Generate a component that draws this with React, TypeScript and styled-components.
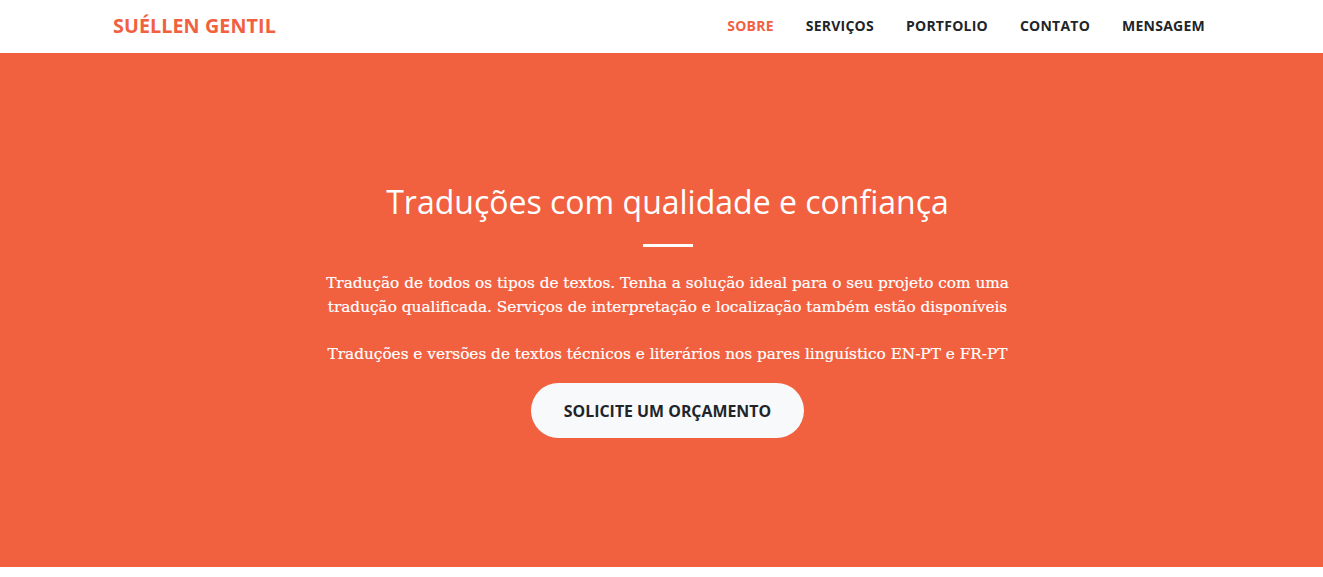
import React from "react";
import styled, { createGlobalStyle } from "styled-components";

const Global = createGlobalStyle`
  html, body { margin: 0; padding: 0; background: #ffffff; }
  body { font-family: "Open Sans", "Liberation Sans", sans-serif; }
  * { box-sizing: border-box; }
`;

const primary = "#f1603f";

const Page = styled.div`
  width: 100%;
  min-height: 577px;
  background: #ffffff;
`;

const NavBar = styled.nav`
  height: 53px;
  background: #ffffff;
  display: flex;
  align-items: center;
  justify-content: space-between;
  padding: 0 102px 2px 113px;
`;

const Brand = styled.a`
  font-family: "Open Sans", sans-serif;
  font-weight: 700;
  font-size: 19.7px;
  color: ${primary};
  text-transform: uppercase;
  text-decoration: none;
  letter-spacing: 0.1px;
`;

const NavList = styled.ul`
  display: flex;
  list-style: none;
  margin: 0;
  padding: 0;
`;

const NavLink = styled.a<{ $active?: boolean }>`
  display: block;
  padding: 0 16px;
  font-family: "Open Sans", sans-serif;
  font-weight: 700;
  font-size: 14px;
  letter-spacing: 0.24px;
  text-transform: uppercase;
  text-decoration: none;
  color: ${(p) => (p.$active ? primary : "#212529")};
`;

const Hero = styled.header`
  height: 514px;
  background: ${primary};
  display: flex;
  flex-direction: column;
  align-items: center;
  justify-content: center;
  padding-left: 12px;
  padding-top: 1px;
  text-align: center;
`;

const Title = styled.h1`
  margin: 0;
  font-family: "Open Sans", sans-serif;
  font-weight: 400;
  font-size: 32px;
  line-height: 38px;
  color: #ffffff;
`;

const Divider = styled.hr`
  width: 50px;
  height: 3px;
  border: 0;
  background: #ffffff;
  margin: 23px auto 24px;
`;

const Lead = styled.p`
  margin: 0;
  font-family: "DejaVu Serif", "Liberation Serif", serif;
  font-size: 15.3px;
  line-height: 24.5px;
  color: #ffffff;
  -webkit-text-stroke: 0.2px #ffffff;
  white-space: nowrap;
`;

const LeadGap = styled(Lead)`
  margin-top: 22px;
`;

const Button = styled.a`
  margin-top: 17px;
  display: inline-flex;
  align-items: center;
  justify-content: center;
  width: 273px;
  height: 55px;
  border-radius: 28px;
  background: #f8f9fa;
  color: #212529;
  font-family: "Open Sans", sans-serif;
  font-weight: 700;
  font-size: 15.9px;
  text-transform: uppercase;
  text-decoration: none;
`;

export default function App() {
  const links = ["Sobre", "Serviços", "Portfolio", "Contato", "Mensagem"];
  return (
    <Page>
      <Global />
      <NavBar>
        <Brand href="#">Suéllen Gentil</Brand>
        <NavList>
          {links.map((l, i) => (
            <li key={l}>
              <NavLink href="#" $active={i === 0}>
                {l}
              </NavLink>
            </li>
          ))}
        </NavList>
      </NavBar>
      <Hero>
        <Title>Traduções com qualidade e confiança</Title>
        <Divider />
        <Lead>
          Tradução de todos os tipos de textos. Tenha a solução ideal para o seu projeto com uma
          <br />
          tradução qualificada. Serviços de interpretação e localização também estão disponíveis
        </Lead>
        <LeadGap>
          Traduções e versões de textos técnicos e literários nos pares linguístico EN-PT e FR-PT
        </LeadGap>
        <Button href="#">Solicite um orçamento</Button>
      </Hero>
    </Page>
  );
}
